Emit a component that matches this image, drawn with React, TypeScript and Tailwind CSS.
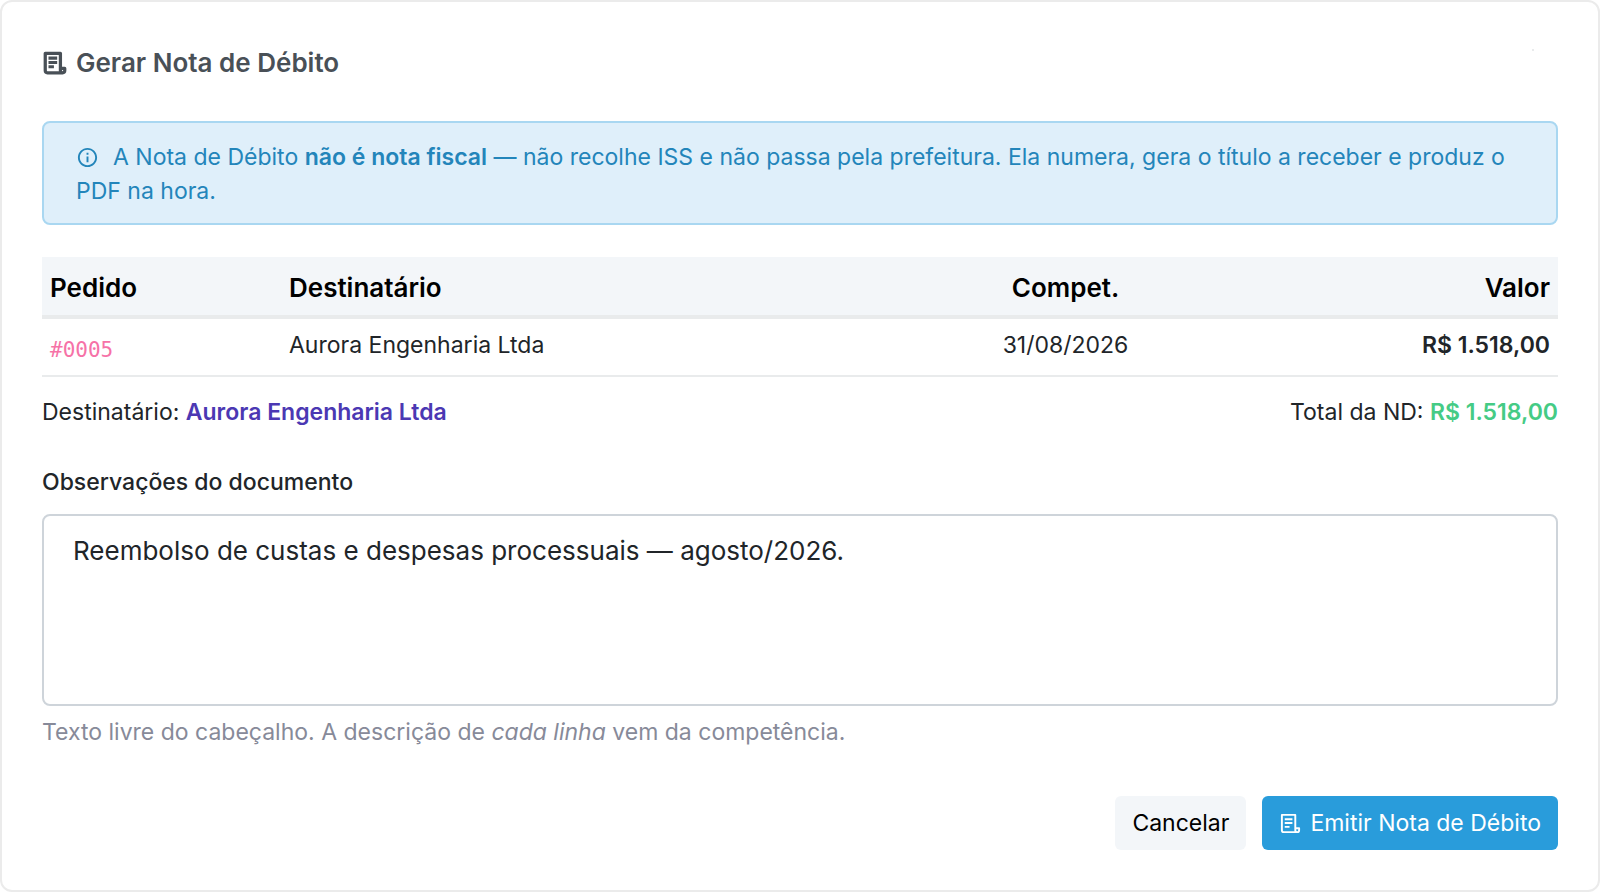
import { useState } from 'react';
import { RiInformationLine } from 'react-icons/ri';

interface Order {
  id: string;
  recipient: string;
  date: string;
  amount: string;
}

const orders: Order[] = [
  { id: '#0005', recipient: 'Aurora Engenharia Ltda', date: '31/08/2026', amount: 'R$ 1.518,00' },
];

function BillIcon({ className, bold }: { className?: string; bold?: boolean }) {
  return (
    <svg
      viewBox="0 0 24 24"
      fill="none"
      stroke="currentColor"
      strokeWidth={bold ? 3 : 2}
      strokeLinejoin="round"
      className={className}
      aria-hidden="true"
    >
      <path d="M19 21H5a2 2 0 0 1-2-2V3h14v16a2 2 0 0 0 4 0v-2h-3" />
      <path d="M6 7.500h8M6 11.500h8M6 15.500h5" strokeWidth={bold ? 2.8 : 2} />
    </svg>
  );
}

export default function App() {
  const [notes, setNotes] = useState('Reembolso de custas e despesas processuais — agosto/2026.');

  return (
    <div className="bg-white font-['Inter',sans-serif] text-[#212529]">
      <div className="rounded-xl border-2 border-[#ebebeb] p-10">
        <div className="flex items-center justify-between">
          <h2 className="flex items-center gap-2 text-[26px] leading-[42px] font-semibold text-[#495057]">
            <BillIcon bold className="size-[26px]" />
            Gerar Nota de Débito
          </h2>
          <button type="button" aria-label="Fechar" className="flex size-[28px] items-start pl-0.5">
            <span className="size-0.5 bg-[#e9ebec]" />
          </button>
        </div>

        <div className="mt-[37px] rounded-lg border-2 border-[#a9d7f1] bg-[#dfeffa] px-8 pt-[17px] pb-[15px] text-[23px] leading-[34px] text-[#2385ba]">
          <RiInformationLine className="mr-3.5 inline size-[23px] align-[-4px]" />
          A Nota de Débito <strong className="font-semibold">não é nota fiscal</strong> — não recolhe ISS e não passa
          pela prefeitura. Ela numera, gera o título a receber e produz o PDF na hora.
        </div>

        <table className="mt-8 w-full table-fixed border-collapse">
          <colgroup>
            <col className="w-[239px]" />
            <col />
            <col className="w-[327px]" />
            <col className="w-[329px]" />
          </colgroup>
          <thead>
            <tr className="border-b-4 border-[#e9ebec] bg-[#f3f6f9] text-[26px] leading-[40px] text-black">
              <th className="px-2 pt-[11px] pb-[7px] text-left font-semibold">Pedido</th>
              <th className="px-2 pt-[11px] pb-[7px] text-left font-semibold">Destinatário</th>
              <th className="px-2 pt-[11px] pb-[7px] text-center font-semibold">Compet.</th>
              <th className="px-2 pt-[11px] pb-[7px] text-right font-semibold">Valor</th>
            </tr>
          </thead>
          <tbody>
            {orders.map(order => (
              <tr key={order.id} className="border-b-2 border-[#e9ebec] text-[23px] leading-[34px]">
                <td className="px-2 pt-3.5 pb-2 font-['DejaVu_Sans_Mono',monospace] text-[21px] text-[#f672a7]">
                  {order.id}
                </td>
                <td className="px-2 pt-[9px] pb-[13px]">{order.recipient}</td>
                <td className="px-2 pt-[9px] pb-[13px] text-center">{order.date}</td>
                <td className="px-2 pt-[9px] pb-[13px] text-right font-semibold">{order.amount}</td>
              </tr>
            ))}
          </tbody>
        </table>

        <div className="mt-[18px] flex justify-between text-[23px] leading-[34px]">
          <div>
            Destinatário: <strong className="font-semibold text-[#4b38b3]">Aurora Engenharia Ltda</strong>
          </div>
          <div>
            Total da ND: <strong className="font-semibold text-[#45cb85]">R$ 1.518,00</strong>
          </div>
        </div>

        <label htmlFor="notes" className="mt-9 block text-[23px] leading-[34px] font-medium">
          Observações do documento
        </label>
        <textarea
          id="notes"
          rows={4}
          value={notes}
          onChange={e => setNotes(e.target.value)}
          className="mt-[15px] block h-[192px] w-full resize-none rounded-lg border-2 border-[#ced4da] px-[29px] py-[15px] text-[26px] leading-[39px] outline-none"
        />
        <p className="mt-[9px] text-[23px] leading-[34px] text-[#878a99]">
          Texto livre do cabeçalho. A descrição de <em>cada linha</em> vem da competência.
        </p>

        <div className="mt-[47px] flex justify-end gap-4 text-[23px] leading-[34px]">
          <button type="button" className="rounded-md bg-[#f3f6f9] px-[17px] py-[10px] text-black">
            Cancelar
          </button>
          <button type="button" className="flex items-center gap-2 rounded-md bg-[#299cdb] px-[17px] py-[10px] text-white">
            <BillIcon className="size-[23px]" />
            Emitir Nota de Débito
          </button>
        </div>
      </div>
    </div>
  );
}
